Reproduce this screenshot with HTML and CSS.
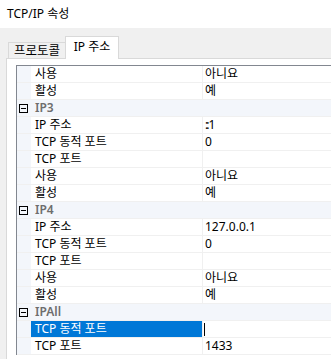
FILE: index.html
```html
<html>
<head>
    <title>TCP/IP 속성</title>
    <meta http-equiv="content-type" content="text/html; charset=UTF-8">
    <link rel="stylesheet" href="styles.css">
</head>
<body>
    <div class="titlebar">TCP/IP 속성</div>

    <div class="tabs">
        <div class="tab">프로토콜</div>
        <div class="tab active">IP 주소</div>
    </div>

    <div class="panel">
        <div class="grid">
            <div class="row"><span class="gutter"></span><span class="name">사용</span><span class="value">아니요</span></div>
            <div class="row"><span class="gutter"></span><span class="name">활성</span><span class="value">예</span></div>

            <div class="row category">
                <span class="gutter"><svg width="9" height="9" viewBox="0 0 9 9"><rect x="0.5" y="0.5" width="8" height="8" fill="none" stroke="#000"/><line x1="2" y1="4.5" x2="7" y2="4.5" stroke="#000"/></svg></span>
                <span class="name">IP3</span><span class="value"></span>
            </div>
            <div class="row"><span class="gutter"></span><span class="name">IP 주소</span><span class="value"><span class="tight">::</span>1</span></div>
            <div class="row"><span class="gutter"></span><span class="name">TCP 동적 포트</span><span class="value">0</span></div>
            <div class="row"><span class="gutter"></span><span class="name">TCP 포트</span><span class="value"></span></div>
            <div class="row"><span class="gutter"></span><span class="name">사용</span><span class="value">아니요</span></div>
            <div class="row"><span class="gutter"></span><span class="name">활성</span><span class="value">예</span></div>

            <div class="row category">
                <span class="gutter"><svg width="9" height="9" viewBox="0 0 9 9"><rect x="0.5" y="0.5" width="8" height="8" fill="none" stroke="#000"/><line x1="2" y1="4.5" x2="7" y2="4.5" stroke="#000"/></svg></span>
                <span class="name">IP4</span><span class="value"></span>
            </div>
            <div class="row"><span class="gutter"></span><span class="name">IP 주소</span><span class="value">127.0.0.1</span></div>
            <div class="row"><span class="gutter"></span><span class="name">TCP 동적 포트</span><span class="value">0</span></div>
            <div class="row"><span class="gutter"></span><span class="name">TCP 포트</span><span class="value"></span></div>
            <div class="row"><span class="gutter"></span><span class="name">사용</span><span class="value">아니요</span></div>
            <div class="row"><span class="gutter"></span><span class="name">활성</span><span class="value">예</span></div>

            <div class="row category">
                <span class="gutter"><svg width="9" height="9" viewBox="0 0 9 9"><rect x="0.5" y="0.5" width="8" height="8" fill="none" stroke="#000"/><line x1="2" y1="4.5" x2="7" y2="4.5" stroke="#000"/></svg></span>
                <span class="name">IPAll</span><span class="value"></span>
            </div>
            <div class="row selected"><span class="gutter"></span><span class="name">TCP 동적 포트</span><span class="value"><span class="caret"></span></span></div>
            <div class="row"><span class="gutter"></span><span class="name">TCP 포트</span><span class="value">1433</span></div>
        </div>
    </div>
</body>
</html>
```

FILE: styles.css
```css
body {
    margin: 0;
    width: 331px;
    height: 359px;
    overflow: hidden;
    background: #f0f0f0;
    font-family: "Noto Sans", "Noto Sans CJK KR", sans-serif;
    font-size: 12px;
    color: #000;
}

.titlebar {
    height: 28px;
    line-height: 28px;
    padding-left: 7px;
    background: #fff;
}

.tabs {
    display: flex;
    align-items: flex-end;
    height: 22px;
    margin-top: 8px;
    padding-left: 8px;
}

.tab {
    box-sizing: border-box;
    height: 16px;
    line-height: 15px;
    width: 58px;
    text-align: center;
    font-size: 12.5px;
    border: 1px solid #d9d9d9;
    border-bottom: none;
    background: #f0f0f0;
}

    .tab.active {
        position: relative;
        height: 23px;
        width: 54px;
        line-height: 20px;
        font-size: 12px;
        margin-bottom: -1px;
        margin-left: -1px;
        background: #fff;
    }

.panel {
    margin-left: 6px;
    height: 300px;
    padding: 6px 0 0 9px;
    border: 1px solid #d9d9d9;
    border-right: none;
    background: #fff;
}

.grid {
    border-left: 1px solid #828790;
    border-top: 1px solid #828790;
    background: #fff;
}

.row {
    display: grid;
    grid-template-columns: 14px 171px 1fr;
    box-sizing: border-box;
    height: 17px;
    line-height: 16px;
    border-bottom: 1px solid #f0f0f0;
}

.gutter {
    display: flex;
    align-items: center;
    padding-left: 2px;
    background: #f3f6fb;
}

.name {
    padding-left: 4px;
    white-space: nowrap;
}

.value {
    padding-left: 2px;
    border-left: 1px solid #f0f0f0;
    white-space: nowrap;
    display: flex;
    align-items: center;
}

.tight {
    letter-spacing: -2px;
    margin-right: 1px;
}

.category {
    background: #f3f6fb;
}

    .category .name {
        color: #6d6d6d;
        font-weight: 600;
    }

    .category .value {
        border-left-color: #f3f6fb;
    }

.selected .name {
    background: #0078d7;
    color: #fff;
}

.caret {
    width: 1px;
    height: 13px;
    background: #000;
    margin-left: -1px;
}
```
